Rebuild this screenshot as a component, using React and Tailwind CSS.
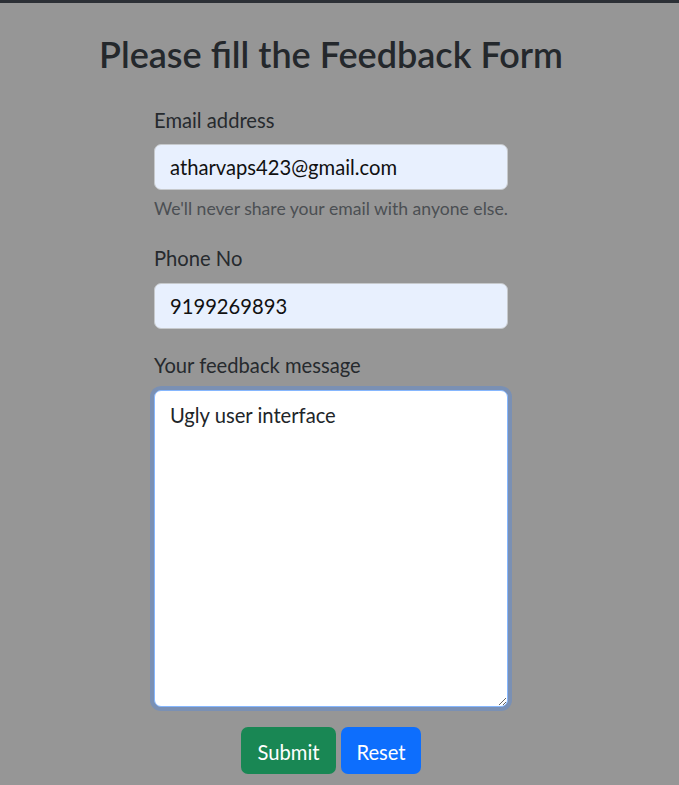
import React, { useState } from 'react';

const font = { fontFamily: 'Lato, "Noto Sans", Arial, sans-serif' };

const Field = ({ label, children, className = '' }) => (
    <div className={className}>
        <label className="block text-[20.2px] leading-[28.8px] text-[#262a2e] mb-[9.6px]">{label}</label>
        {children}
    </div>
);

const FeedbackForm = () => {
    const [email, setEmail] = useState('atharvaps423@gmail.com');
    const [phone, setPhone] = useState('9199269893');
    const [message, setMessage] = useState('Ugly user interface');

    const handleReset = () => {
        setEmail('');
        setPhone('');
        setMessage('');
    };

    return (
        <div className="min-h-screen bg-[#969696] border-t-[3px] border-[#2c3036]" style={font}>
            <div className="w-[662px]">
                <h1 className="pt-[30px] text-center text-[36px] leading-[43px] font-semibold text-[#24282c]">
                    Please fill the Feedback Form
                </h1>

                <form className="w-[354px] mx-auto mt-[30px]" onSubmit={(e) => e.preventDefault()}>
                    <Field label="Email address">
                        <input
                            type="email"
                            value={email}
                            onChange={(e) => setEmail(e.target.value)}
                            className="block w-full h-[46px] px-[15px] rounded-[7px] border border-[#c6c9cc] bg-[#e8f0fe] text-[20.2px] text-[#111] outline-none"
                        />
                    </Field>
                    <p className="mt-[6px] whitespace-nowrap text-[17.6px] leading-[25px] text-[#4b4f53]">
                        We&apos;ll never share your email with anyone else.
                    </p>

                    <Field label="Phone No" className="mt-[23px]">
                        <input
                            type="text"
                            value={phone}
                            onChange={(e) => setPhone(e.target.value)}
                            className="block w-full h-[46px] px-[15px] rounded-[7px] border border-[#c6c9cc] bg-[#e8f0fe] text-[20.2px] text-[#111] outline-none"
                        />
                    </Field>

                    <Field label="Your feedback message" className="mt-[22.6px]">
                        <textarea
                            value={message}
                            onChange={(e) => setMessage(e.target.value)}
                            className="block w-full h-[317px] px-[15px] py-[10px] rounded-[7px] border border-[#86b7fe] bg-white text-[20.2px] leading-[28.8px] text-[#212529] outline-none shadow-[0_0_0_4px_#7a90b4]"
                        />
                    </Field>

                    <div className="flex justify-center gap-[5px] mt-[20px] pb-[11px]">
                        <button
                            type="submit"
                            className="h-[47px] w-[95px] pt-[3px] rounded-[7px] bg-[#198754] text-white text-[20.2px]"
                        >
                            Submit
                        </button>
                        <button
                            type="button"
                            onClick={handleReset}
                            className="h-[47px] w-[80px] pt-[3px] rounded-[7px] bg-[#0d6efd] text-white text-[20.2px]"
                        >
                            Reset
                        </button>
                    </div>
                </form>
            </div>
        </div>
    );
};

export default FeedbackForm;
